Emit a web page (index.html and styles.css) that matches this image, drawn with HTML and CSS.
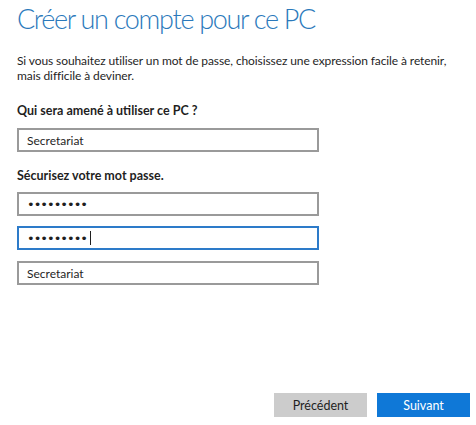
FILE: index.html
```html
<!DOCTYPE html>
<html>

<head>
  <title>Créer un compte pour ce PC</title>
  <link rel="stylesheet" href="styles.css">
</head>

<body>
  <div class="page">
    <h1 class="title">Créer un compte pour ce PC</h1>
    <p class="intro">Si vous souhaitez utiliser un mot de passe, choisissez une expression facile à retenir, mais difficile à deviner.</p>
    <form class="form">
      <label for="userName" class="label">Qui sera amené à utiliser ce PC ?</label>
      <input type="text" id="userName" class="field" value="Secretariat">
      <label for="password" class="label second">Sécurisez votre mot passe.</label>
      <input type="password" id="password" class="field secret" value="secretar1">
      <div class="field-wrap">
        <input type="password" id="verifyPassword" class="field secret focused" value="secretar1">
        <span class="caret"></span>
      </div>
      <input type="text" id="hint" class="field" value="Secretariat">
    </form>
    <div class="actions">
      <button type="button" class="btn back">Précédent</button>
      <button type="button" class="btn next">Suivant</button>
    </div>
  </div>
</body>

</html>
```

FILE: styles.css
```css
html, body {
  margin: 0;
  padding: 0;
  background: #ffffff;
}
.page {
  width: 476px;
  height: 425px;
  padding: 0 0 0 17px;
  box-sizing: border-box;
  display: flex;
  flex-direction: column;
  font-family: Lato, "Open Sans", sans-serif;
  color: #1f1f1f;
}
.title {
  margin: 0;
  font-size: 27px;
  font-weight: 300;
  line-height: 38px;
  letter-spacing: -1.3px;
  color: #2b79bb;
}
.intro {
  margin: 15px 0 0 0;
  width: 450px;
  font-size: 12px;
  line-height: 15px;
  letter-spacing: -0.1px;
}
.form {
  display: flex;
  flex-direction: column;
  margin-top: 20px;
}
.label {
  display: block;
  font-size: 12.5px;
  font-weight: 700;
  line-height: 15px;
  margin-bottom: 10px;
}
.label.second {
  margin-top: 6px;
  margin-bottom: 9px;
}
.field {
  width: 302px;
  height: 24px;
  box-sizing: border-box;
  margin: 0 0 10px 0;
  padding: 0 8px;
  border: 2px solid #9a9a9a;
  border-radius: 0;
  outline: none;
  font-family: Lato, "Open Sans", sans-serif;
  font-size: 12px;
  color: #1f1f1f;
  background: #ffffff;
}
.field.secret {
  font-family: "DejaVu Sans", sans-serif;
  font-size: 13px;
  letter-spacing: -1px;
}
.field-wrap {
  position: relative;
  width: 302px;
  margin-bottom: 11px;
}
.field-wrap .field {
  margin: 0;
  display: block;
}
.field.focused {
  border-color: #2d7bc9;
}
.caret {
  position: absolute;
  left: 73px;
  top: 5px;
  width: 1px;
  height: 14px;
  background: #1f1f1f;
}
.actions {
  margin-top: auto;
  margin-bottom: 8px;
  display: flex;
  justify-content: flex-end;
  gap: 10px;
  padding-right: 6px;
}
.btn {
  width: 93px;
  height: 24px;
  border: none;
  font-family: Lato, "Open Sans", sans-serif;
  font-size: 12.5px;
  cursor: pointer;
}
.back {
  background: #cccccc;
  color: #1f1f1f;
}
.next {
  background: #0f78d7;
  color: #ffffff;
}
```
